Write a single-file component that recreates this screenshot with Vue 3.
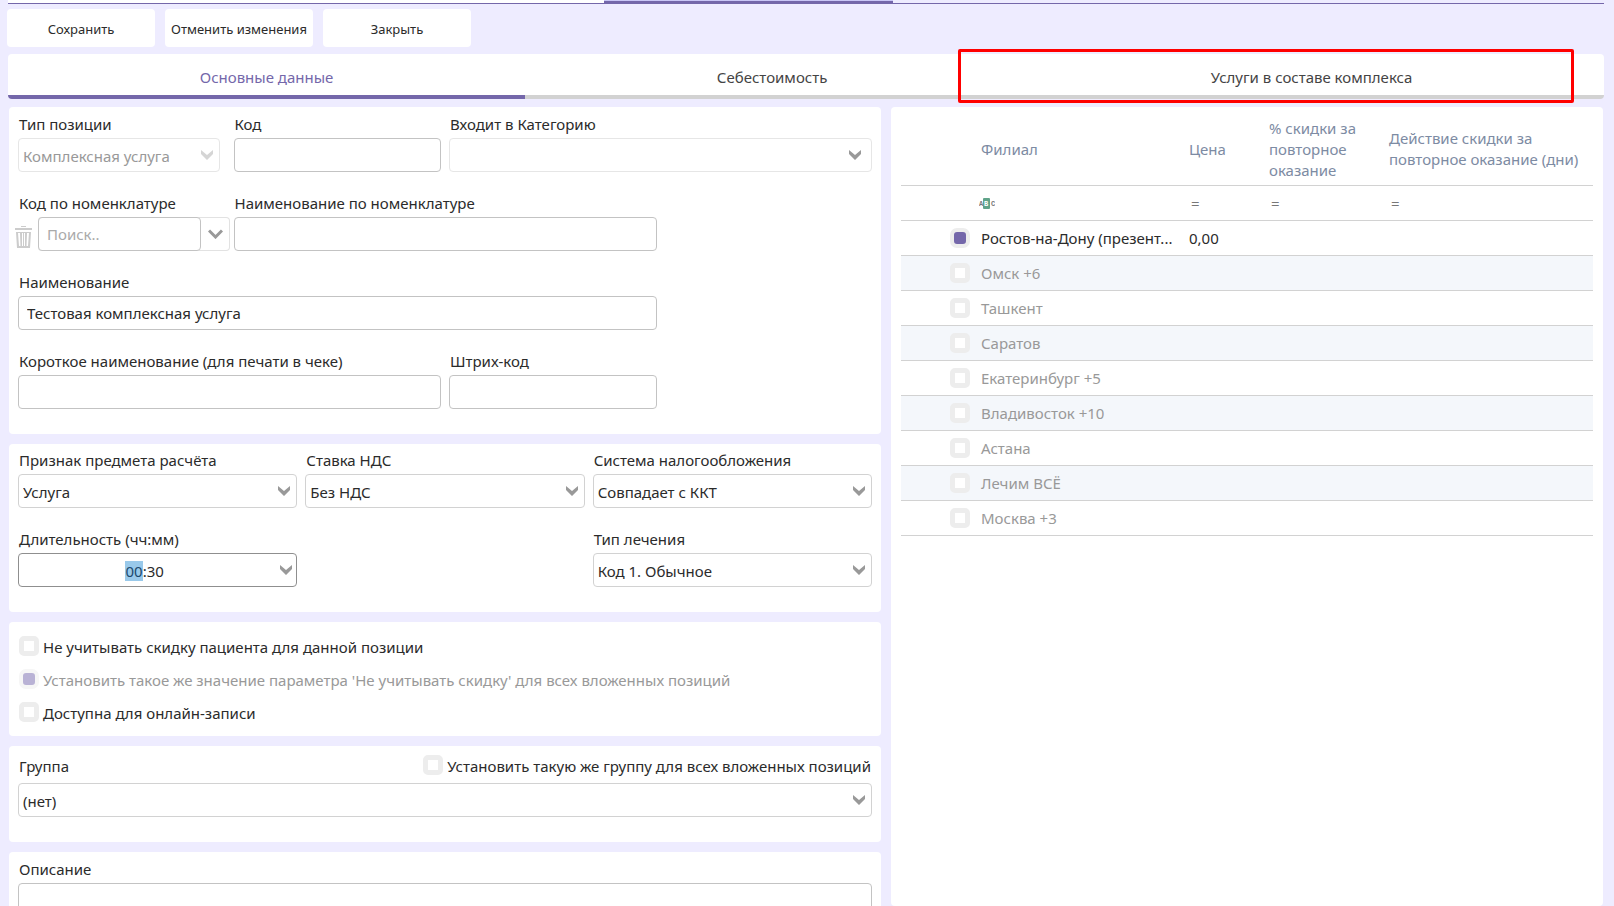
<script setup>
import { ref, onMounted } from 'vue'

const actions = ['Сохранить', 'Отменить изменения', 'Закрыть']
const tabs = ['Основные данные', 'Себестоимость', 'Услуги в составе комплекса']
const activeTab = ref(0)

const itemType = ref('Комплексная услуга')
const category = ref('')
const subject = ref('Услуга')
const vat = ref('Без НДС')
const taxSystem = ref('Совпадает с ККТ')
const treatment = ref('Код 1. Обычное')
const group = ref('(нет)')
const name = ref('Тестовая комплексная услуга')
const duration = ref('00:30')
const durationInput = ref(null)

const options = ref([
  { id: 'ignore', label: 'Не учитывать скидку пациента для данной позиции', checked: false, disabled: false },
  { id: 'nested', label: "Установить такое же значение параметра 'Не учитывать скидку' для всех вложенных позиций", checked: true, disabled: true },
  { id: 'online', label: 'Доступна для онлайн-записи', checked: false, disabled: false }
])
const groupForAll = ref(false)

const branches = ref([
  { name: 'Ростов-на-Дону (презент...', price: '0,00', checked: true },
  { name: 'Омск +6', price: '', checked: false },
  { name: 'Ташкент', price: '', checked: false },
  { name: 'Саратов', price: '', checked: false },
  { name: 'Екатеринбург +5', price: '', checked: false },
  { name: 'Владивосток +10', price: '', checked: false },
  { name: 'Астана', price: '', checked: false },
  { name: 'Лечим ВСЁ', price: '', checked: false },
  { name: 'Москва +3', price: '', checked: false }
])

onMounted(() => {
  durationInput.value.focus()
  durationInput.value.setSelectionRange(0, 2)
})
</script>

<template>
  <div class="page">
    <div class="strip"><span class="strip-open"></span><span class="strip-current"></span></div>

    <div class="toolbar">
      <button v-for="a in actions" :key="a" type="button">{{ a }}</button>
    </div>

    <div class="tabs" role="tablist">
      <button
        v-for="(t, i) in tabs"
        :key="t"
        type="button"
        role="tab"
        class="tab"
        :class="{ active: i === activeTab }"
        :aria-selected="i === activeTab"
        @click="activeTab = i"
      >
        {{ t }}
        <span v-if="i === 2" class="marker"></span>
      </button>
    </div>

    <main class="content">
      <form class="left" @submit.prevent>
        <section class="panel general">
          <div class="field">
            <label for="type">Тип позиции</label>
            <div class="select faint type">
              <select id="type" v-model="itemType" disabled><option>Комплексная услуга</option></select>
              <svg viewBox="0 0 12 10"><path d="M0 0L6 5L12 0V4L6 10L0 4Z" /></svg>
            </div>
          </div>
          <div class="field">
            <label for="code">Код</label>
            <input id="code" type="text" />
          </div>
          <div class="field span2">
            <label for="category">Входит в Категорию</label>
            <div class="select faint">
              <select id="category" v-model="category"><option value=""></option></select>
              <svg class="inner" viewBox="0 0 12 10"><path d="M0 0L6 5L12 0V4L6 10L0 4Z" /></svg>
            </div>
          </div>

          <div class="field">
            <label for="nomcode">Код по номенклатуре</label>
            <div class="lookup">
              <button type="button" class="trash" aria-label="Удалить">
                <svg viewBox="0 0 17 22">
                  <path d="M6 0h5v1H6zM0 2h17v2H0zM1 6h15l-1 16H2z" />
                  <path class="slots" d="M3 7h2l.5 13h-1.500zM7 7h1v13H7zM9 7h1v13h-1zM12 7h2l-1 13h-1.500z" />
                </svg>
              </button>
              <div class="combo">
                <input id="nomcode" type="text" placeholder="Поиск.." />
                <button type="button" aria-label="Открыть список">
                  <svg viewBox="0 0 15 10"><path d="M1 1.500L7.500 8L14 1.500" /></svg>
                </button>
              </div>
            </div>
          </div>
          <div class="field span2">
            <label for="nomname">Наименование по номенклатуре</label>
            <input id="nomname" type="text" />
          </div>

          <div class="field span3 first">
            <label for="name">Наименование</label>
            <input id="name" v-model="name" type="text" />
          </div>

          <div class="field span2 first">
            <label for="short">Короткое наименование (для печати в чеке)</label>
            <input id="short" type="text" />
          </div>
          <div class="field">
            <label for="barcode">Штрих-код</label>
            <input id="barcode" type="text" />
          </div>
        </section>

        <section class="panel billing">
          <div class="field">
            <label for="subject">Признак предмета расчёта</label>
            <div class="select">
              <select id="subject" v-model="subject"><option>Услуга</option></select>
              <svg viewBox="0 0 12 10"><path d="M0 0L6 5L12 0V4L6 10L0 4Z" /></svg>
            </div>
          </div>
          <div class="field">
            <label for="vat">Ставка НДС</label>
            <div class="select">
              <select id="vat" v-model="vat"><option>Без НДС</option></select>
              <svg viewBox="0 0 12 10"><path d="M0 0L6 5L12 0V4L6 10L0 4Z" /></svg>
            </div>
          </div>
          <div class="field">
            <label for="tax">Система налогообложения</label>
            <div class="select">
              <select id="tax" v-model="taxSystem"><option>Совпадает с ККТ</option></select>
              <svg viewBox="0 0 12 10"><path d="M0 0L6 5L12 0V4L6 10L0 4Z" /></svg>
            </div>
          </div>
          <div class="field first">
            <label for="duration">Длительность (чч:мм)</label>
            <div class="select duration">
              <input id="duration" ref="durationInput" v-model="duration" type="text" />
              <svg viewBox="0 0 12 10"><path d="M0 0L6 5L12 0V4L6 10L0 4Z" /></svg>
            </div>
          </div>
          <div class="field third">
            <label for="treatment">Тип лечения</label>
            <div class="select">
              <select id="treatment" v-model="treatment"><option>Код 1. Обычное</option></select>
              <svg viewBox="0 0 12 10"><path d="M0 0L6 5L12 0V4L6 10L0 4Z" /></svg>
            </div>
          </div>
        </section>

        <section class="panel options">
          <label v-for="o in options" :key="o.id" class="check" :class="{ disabled: o.disabled }">
            <input v-model="o.checked" type="checkbox" :disabled="o.disabled" />
            <span>{{ o.label }}</span>
          </label>
        </section>

        <section class="panel group">
          <div class="group-head">
            <label for="group">Группа</label>
            <label class="check">
              <input v-model="groupForAll" type="checkbox" />
              <span>Установить такую же группу для всех вложенных позиций</span>
            </label>
          </div>
          <div class="select">
            <select id="group" v-model="group"><option>(нет)</option></select>
            <svg viewBox="0 0 12 10"><path d="M0 0L6 5L12 0V4L6 10L0 4Z" /></svg>
          </div>
        </section>

        <section class="panel description">
          <div class="field">
            <label for="description">Описание</label>
            <textarea id="description" rows="5"></textarea>
          </div>
        </section>
      </form>

      <section class="panel right">
        <table>
          <colgroup>
            <col class="c-check" /><col class="c-name" /><col class="c-price" /><col class="c-discount" /><col />
          </colgroup>
          <thead>
            <tr>
              <th></th>
              <th>Филиал</th>
              <th>Цена</th>
              <th>% скидки за повторное оказание</th>
              <th>Действие скидки за повторное оказание (дни)</th>
            </tr>
          </thead>
          <tbody>
            <tr class="filters">
              <td></td>
              <td>
                <svg class="abc" viewBox="0 0 16 11">
                  <rect x="4" width="7" height="11" rx="1" />
                  <text x="0" y="8">A</text>
                  <text class="mid" x="5" y="8">B</text>
                  <text x="12" y="8">C</text>
                </svg>
              </td>
              <td>=</td>
              <td>=</td>
              <td>=</td>
            </tr>
            <tr v-for="(b, i) in branches" :key="b.name" :class="{ odd: i % 2, off: !b.checked }">
              <td class="pick"><input v-model="b.checked" type="checkbox" :aria-label="b.name" /></td>
              <td class="name">{{ b.name }}</td>
              <td>{{ b.price }}</td>
              <td></td>
              <td></td>
            </tr>
          </tbody>
        </table>
      </section>
    </main>
  </div>
</template>

<style>
body {
  margin: 0;
  background: #eeecff;
}
</style>

<style scoped>
.page {
  height: 100vh;
  box-sizing: border-box;
  overflow: hidden;
  display: flex;
  flex-direction: column;
  background: #eeecff;
  color: #2b2b2b;
  font-family: "Noto Sans", "Open Sans", sans-serif;
  font-size: 15px;
}
button, input, select, textarea {
  font: inherit;
  color: inherit;
  box-sizing: border-box;
  margin: 0;
  outline: none;
}
.strip {
  display: grid;
  grid-template-columns: 596fr 289fr 711fr;
  height: 3px;
  margin: 0 10px 0 8px;
  border-bottom: 1px solid #7467aa;
  flex: none;
}
.strip-open { background: #fff; }
.strip-current { background: #7467aa; border-top: 1px solid #c9c6f6; }

.toolbar {
  display: flex;
  gap: 10px;
  padding: 5px 7px 7px;
  flex: none;
}
.toolbar button {
  width: 148px;
  height: 38px;
  padding: 2px 0 0;
  border: 0;
  border-radius: 4px;
  background: #fff;
  font-size: 13px;
  white-space: nowrap;
}

.tabs {
  display: flex;
  margin: 0 10px 0 8px;
  flex: none;
}
.tab {
  position: relative;
  flex: 1 1 auto;
  height: 45px;
  padding: 4px 0 0;
  border: 0;
  border-bottom: 4px solid #d2d2d2;
  background: #fff;
  color: #444;
}
.tab:first-child { border-radius: 4px 0 0 4px; }
.tab:last-child { border-radius: 0 4px 4px 0; }
.tab.active { color: #7467aa; border-bottom-color: #7467aa; }
.marker {
  position: absolute;
  top: -5px;
  bottom: -8px;
  left: -61px;
  right: 30px;
  border: 3px solid #f00;
  border-radius: 2px;
  pointer-events: none;
}

.content {
  flex: 1;
  min-height: 0;
  display: grid;
  grid-template-columns: 872fr 712fr;
  gap: 10px;
  padding: 8px 11px 0 9px;
}
.left {
  display: flex;
  flex-direction: column;
  gap: 10px;
  min-width: 0;
  overflow: hidden;
}
.panel { background: #fff; border-radius: 4px; flex: none; }
.left .panel { padding: 6px 9px 25px; }
.general, .billing { display: grid; gap: 20px 8px; }
.general { grid-template-columns: repeat(4, 1fr); }
.left .billing { grid-template-columns: repeat(3, 1fr); padding-top: 5px; }
.span2 { grid-column-end: span 2; }
.span3 { grid-column-end: span 3; }
.first { grid-column-start: 1; }
.third { grid-column-start: 3; }

.field { display: flex; flex-direction: column; min-width: 0; }
.field > label { line-height: 23px; padding: 0 1px 2px; white-space: nowrap; }
input[type="text"] {
  width: 100%;
  height: 34px;
  padding: 0 8px;
  border: 1px solid #c3c3c3;
  border-radius: 4px;
  background: #fff;
}
textarea {
  width: 100%;
  border: 1px solid #c3c3c3;
  border-radius: 4px;
  resize: none;
}

.select { position: relative; }
.select select {
  display: block;
  width: 100%;
  height: 34px;
  padding: 1px 24px 0 4px;
  border: 1px solid #d2d2d2;
  border-radius: 4px;
  background: #fff;
  appearance: none;
}
.select svg {
  position: absolute;
  top: 12px;
  right: 7px;
  width: 12px;
  height: 10px;
  fill: #999;
  pointer-events: none;
}
.select svg.inner { right: 11px; }
.select.faint select { border-color: #e6e6e6; }
.type { margin-right: 6px; }
.type select { color: #999; opacity: 1; }
.type svg { fill: #d5d5d5; }
.duration input { padding: 1px 32px 0 6px; border-color: #8f8f8f; text-align: center; }
.duration svg { right: 5px; }
.duration input::selection { background: #99c9ea; color: #1c4a6e; }

.lookup { display: flex; align-items: center; gap: 6px; margin: 0 -4px 0 -3px; }
.trash { width: 17px; height: 34px; padding: 6px 0 0; border: 0; background: none; flex: none; }
.trash svg { display: block; width: 17px; height: 22px; fill: #ccc; }
.trash .slots { fill: #fff; }
.combo { display: flex; flex: 1; min-width: 0; border-radius: 4px; box-shadow: inset 0 0 0 1px #e2e2e2; }
.combo input { flex: 1; min-width: 0; }
.combo input::placeholder { color: #aaa; opacity: 1; }
.combo button { width: 29px; padding: 0; border: 0; background: none; flex: none; }
.combo svg { display: block; width: 15px; height: 10px; margin: 0 auto; fill: none; stroke: #999; stroke-width: 3; }

input[type="checkbox"] {
  appearance: none;
  width: 20px;
  height: 20px;
  flex: none;
  border: 5px solid #ededed;
  border-radius: 5px;
  background: #fff;
}
input[type="checkbox"]:checked {
  border: 0;
  background: #7467aa;
  box-shadow: inset 0 0 0 4px #ededed;
  border: 4px solid #ededed;
  border-radius: 7px;
}
input[type="checkbox"]:checked:disabled {
  border-color: #f6f6f6;
  background: #b9b2d5;
}
input[type="checkbox"]:checked { box-shadow: none; }
.check { display: flex; gap: 4px; line-height: 22px; white-space: nowrap; }
.check.disabled { color: #999; }
.left .options { display: flex; flex-direction: column; gap: 11px; padding: 14px 10px 12px; }
.left .group { padding-top: 9px; }
.group-head {
  display: flex;
  justify-content: space-between;
  padding: 0 1px 6px;
  line-height: 22px;
}

.right { padding: 7px 10px 0; min-width: 0; }
table { width: 100%; table-layout: fixed; border-collapse: separate; border-spacing: 0; }
.c-check { width: 74px; }
.c-name { width: 208px; }
.c-price { width: 80px; }
.c-discount { width: 120px; }
th, td {
  box-sizing: border-box;
  height: 35px;
  padding: 1px 6px 0;
  border-bottom: 1px solid #d2d2d2;
  text-align: left;
  vertical-align: middle;
  font-weight: 400;
  line-height: 21px;
}
th { height: 72px; padding-top: 0; padding-bottom: 1px; color: #7d8ba3; }
td.pick { padding: 0 5px 0; text-align: right; }
td.pick input { display: block; margin-left: auto; }
td.name { white-space: nowrap; }
.filters td { padding: 0 8px 0; color: #777; }
.filters td:nth-child(2) { padding: 0 4px; }
.odd td { background: #f4f7fb; }
.off td { color: #999; }
.abc { display: block; width: 16px; height: 11px; fill: #777; font: 700 7px "Liberation Mono", monospace; }
.abc rect { fill: #5fa389; }
.abc .mid { fill: #fff; }
</style>
